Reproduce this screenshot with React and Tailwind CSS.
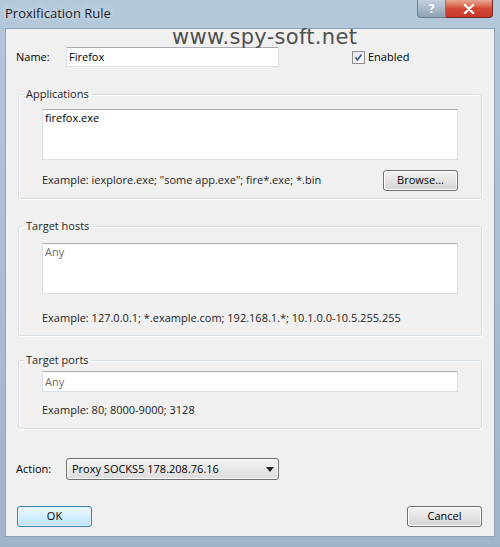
import { ChevronDown } from 'lucide-react';

const font = { fontFamily: '"Open Sans", "Noto Sans", sans-serif' };

const GroupBox = ({ title, children, className = '' }) => (
  <fieldset
    className={`mx-[12px] border border-[#d5dfe5] rounded-[3px] shadow-[inset_1px_1px_0_#fff,1px_1px_0_#fff] px-[23px] ${className}`}
  >
    <legend className="ml-[-19px] px-[3px] text-[11px] leading-[14px] text-[#1e1e1e]">{title}</legend>
    {children}
  </fieldset>
);

const Field = ({ value, muted, className = '' }) => (
  <div
    className={`bg-white border border-[#dbdfe6] border-t-[#abadb3] px-[2px] text-[11px] leading-[16px] ${
      muted ? 'text-[#6d6d6d]' : 'text-black'
    } ${className}`}
  >
    {value}
  </div>
);

const WinButton = ({ children, primary }) => (
  <button
    className={`w-[75px] h-[21px] rounded-[3px] border text-[11px] text-black ${
      primary
        ? 'border-[#3c7fb1] bg-gradient-to-b from-[#eaf6fd] to-[#bee6fd] shadow-[inset_0_0_0_1px_#dff3fc]'
        : 'border-[#707070] bg-gradient-to-b from-[#f2f2f2] to-[#d5d5d5] shadow-[inset_0_0_0_1px_#fcfcfc]'
    }`}
  >
    {children}
  </button>
);

export default function App() {
  return (
    <div className="w-[500px] h-[547px] flex flex-col bg-gradient-to-b from-[#b4c8dc] to-[#9fb4c9] overflow-hidden" style={font}>
      {/* Title bar */}
      <div className="h-[28px] flex items-start justify-between pl-[5px] pr-[7px]">
        <span className="mt-[4px] text-[13px] text-[#1b1b1b] [text-shadow:0_0_6px_#e8f0f8]">Proxification Rule</span>
        <div className="flex">
          <div className="w-[29px] h-[18px] rounded-bl-[4px] border border-t-0 border-[#6f7f90] bg-gradient-to-b from-[#c3d0dd] to-[#8fa2b6] flex items-center justify-center text-white text-[12px] font-bold leading-none">
            ?
          </div>
          <div className="w-[47px] h-[18px] rounded-br-[4px] border border-t-0 border-l-0 border-[#7a2a20] bg-gradient-to-b from-[#e8a593] via-[#d24a35] to-[#c7372a] flex items-center justify-center">
            <svg width="12" height="10" viewBox="0 0 12 10">
              <path d="M2 1 L10 9 M10 1 L2 9" stroke="#fff" strokeWidth="2.4" strokeLinecap="round" />
            </svg>
          </div>
        </div>
      </div>

      {/* Client area */}
      <div className="relative mx-[5px] flex-1 bg-[#f0f0f0] border border-[#8ea3b8] flex flex-col">
        <div
          className="absolute left-[166px] top-[-5px] text-[21px] leading-[26px] text-[#505050] tracking-[0.3px]"
          style={{ fontFamily: '"DejaVu Sans", sans-serif' }}
        >
          www.spy-soft.net
        </div>

        {/* Name row */}
        <div className="flex items-center mt-[18px] pl-[10px] h-[20px]">
          <span className="w-[50px] text-[11px]">Name:</span>
          <Field value="Firefox" className="w-[213px] h-[20px] leading-[18px]" />
          <label className="ml-[73px] flex items-center gap-[3px] text-[11px]">
            <span className="w-[13px] h-[13px] border border-[#8e8f8f] bg-gradient-to-br from-[#e6e6e6] to-[#fbfbfb] flex items-center justify-center">
              <svg width="9" height="9" viewBox="0 0 9 9">
                <path d="M1.5 4.5 L3.5 7 L7.5 1.5" stroke="#3d4f8a" strokeWidth="1.6" fill="none" />
              </svg>
            </span>
            Enabled
          </label>
        </div>

        {/* Applications */}
        <GroupBox title="Applications" className="mt-[20px] h-[112px] pt-[8px]">
          <Field value="firefox.exe" className="h-[51px]" />
          <div className="flex items-center justify-between mt-[10px] h-[21px]">
            <span className="text-[11px] text-[#1e1e1e]">Example: iexplore.exe; "some app.exe"; fire*.exe; *.bin</span>
            <WinButton>Browse...</WinButton>
          </div>
        </GroupBox>

        {/* Target hosts */}
        <GroupBox title="Target hosts" className="mt-[20px] h-[117px] pt-[10px]">
          <Field value="Any" muted className="h-[51px]" />
          <div className="mt-[16px] text-[11px] text-[#1e1e1e]">
            Example: 127.0.0.1; *.example.com; 192.168.1.*; 10.1.0.0-10.5.255.255
          </div>
        </GroupBox>

        {/* Target ports */}
        <GroupBox title="Target ports" className="mt-[17px] h-[76px] pt-[4px]">
          <Field value="Any" muted className="h-[21px] leading-[19px]" />
          <div className="mt-[10px] text-[11px] text-[#1e1e1e]">Example: 80; 8000-9000; 3128</div>
        </GroupBox>

        {/* Action */}
        <div className="flex items-center mt-[29px] pl-[10px]">
          <span className="w-[50px] text-[11px]">Action:</span>
          <div className="w-[213px] h-[22px] rounded-[3px] border border-[#707070] bg-gradient-to-b from-[#f4f4f4] to-[#dcdcdc] shadow-[inset_0_0_0_1px_#fbfbfb] flex items-center justify-between pl-[5px] pr-[4px] text-[11px]">
            <span>Proxy SOCKS5 178.208.76.16</span>
            <svg width="8" height="5" viewBox="0 0 8 5">
              <path d="M0 0 H8 L4 5 Z" fill="#222" />
            </svg>
          </div>
        </div>

        {/* Buttons */}
        <div className="flex justify-between mt-[26px] pl-[11px] pr-[12px]">
          <WinButton primary>OK</WinButton>
          <WinButton>Cancel</WinButton>
        </div>
      </div>

      {/* Bottom frame */}
      <div className="h-[10px]" />
    </div>
  );
}
